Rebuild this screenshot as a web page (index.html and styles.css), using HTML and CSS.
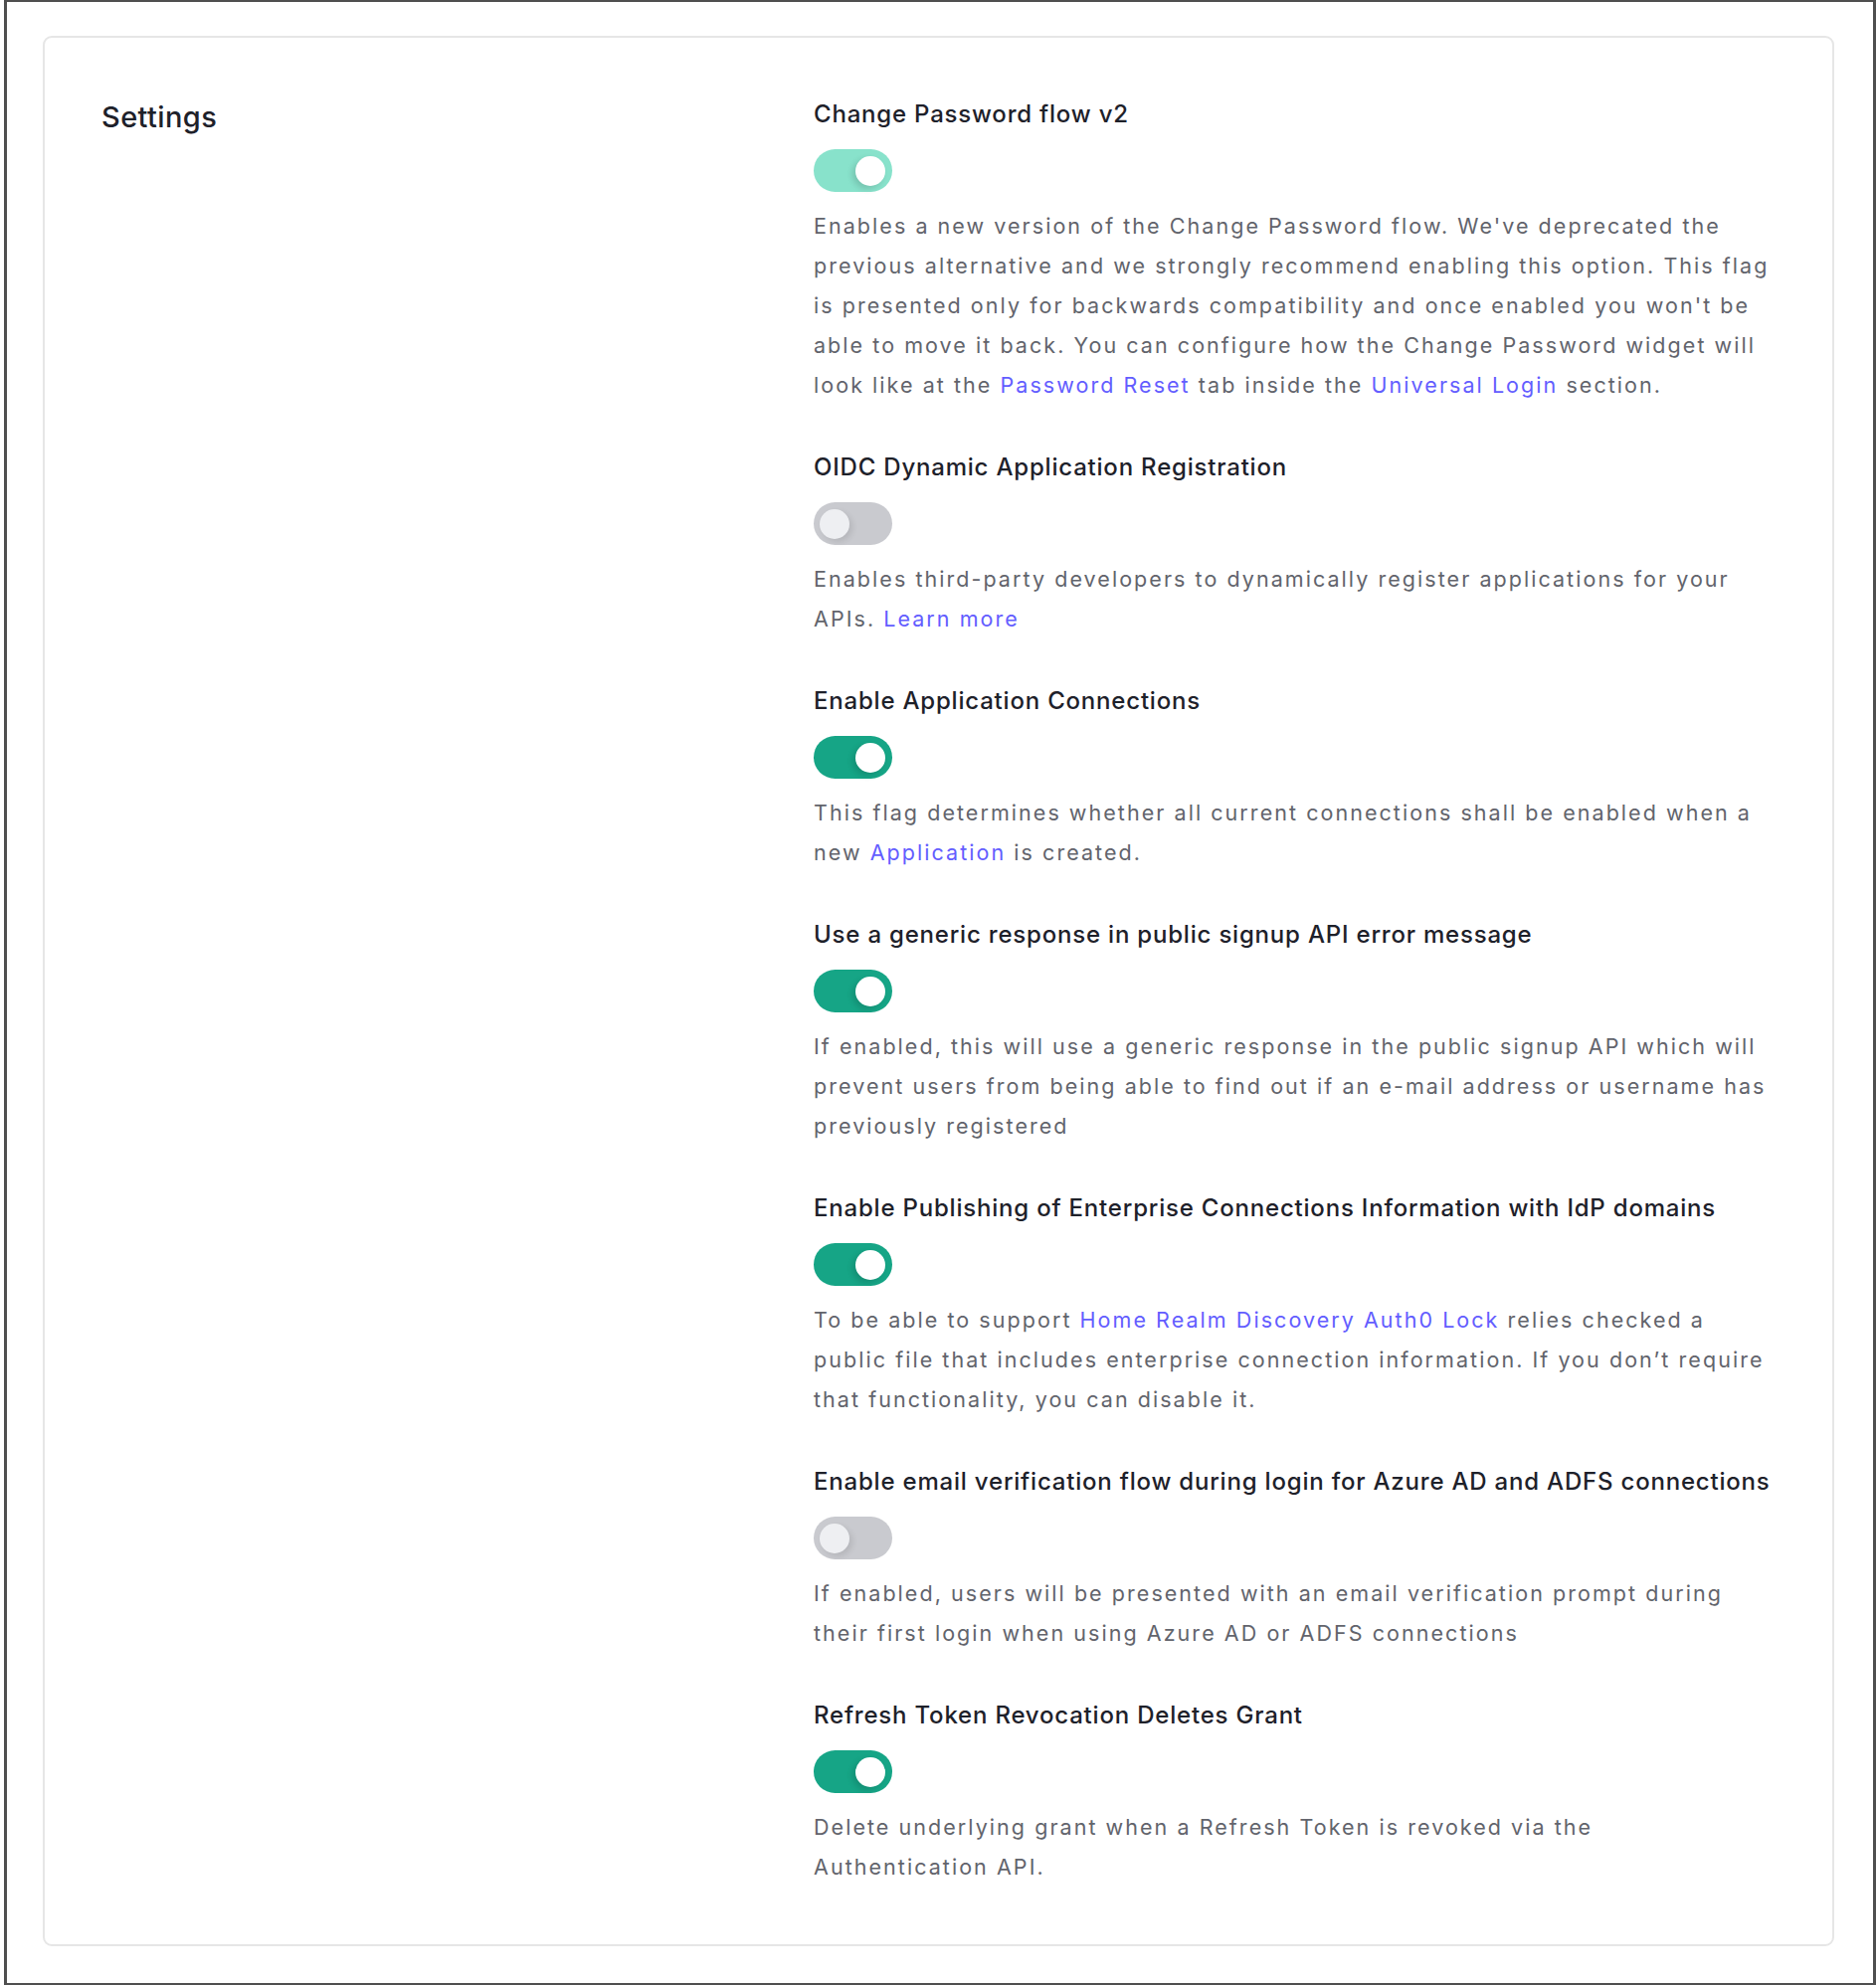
FILE: index.html
```html
<!DOCTYPE html>
<html lang="en">
<head>
<meta charset="utf-8">
<title>Settings</title>
<link rel="stylesheet" href="styles.css">
</head>
<body>
<div class="frame">
  <section class="card">
    <h2 class="card-title">Settings</h2>
    <div class="fields">
      <div class="field">
        <h3 class="field-label">Change Password flow v2</h3>
        <span class="toggle toggle-on toggle-locked"><span class="knob"></span></span>
        <p class="field-desc">Enables a new version of the Change Password flow. We've deprecated the previous alternative and we strongly recommend enabling this option. This flag is presented only for backwards compatibility and once enabled you won't be able to move it back. You can configure how the Change Password widget will look like at the <a href="#">Password Reset</a> tab inside the <a href="#">Universal Login</a> section.</p>
      </div>
      <div class="field">
        <h3 class="field-label">OIDC Dynamic Application Registration</h3>
        <span class="toggle toggle-off"><span class="knob"></span></span>
        <p class="field-desc">Enables third-party developers to dynamically register applications for your APIs. <a href="#">Learn more</a></p>
      </div>
      <div class="field">
        <h3 class="field-label">Enable Application Connections</h3>
        <span class="toggle toggle-on"><span class="knob"></span></span>
        <p class="field-desc">This flag determines whether all current connections shall be enabled when a new <a href="#">Application</a> is created.</p>
      </div>
      <div class="field">
        <h3 class="field-label">Use a generic response in public signup API error message</h3>
        <span class="toggle toggle-on"><span class="knob"></span></span>
        <p class="field-desc">If enabled, this will use a generic response in the public signup API which will prevent users from being able to find out if an e-mail address or username has previously registered</p>
      </div>
      <div class="field">
        <h3 class="field-label">Enable Publishing of Enterprise Connections Information with IdP domains</h3>
        <span class="toggle toggle-on"><span class="knob"></span></span>
        <p class="field-desc">To be able to support <a href="#">Home Realm Discovery</a> <a href="#">Auth0 Lock</a> relies checked a public file that includes enterprise connection information. If you don’t require that functionality, you can disable it.</p>
      </div>
      <div class="field">
        <h3 class="field-label">Enable email verification flow during login for Azure AD and ADFS connections</h3>
        <span class="toggle toggle-off"><span class="knob"></span></span>
        <p class="field-desc">If enabled, users will be presented with an email verification prompt during their first login when using Azure AD or ADFS connections</p>
      </div>
      <div class="field">
        <h3 class="field-label">Refresh Token Revocation Deletes Grant</h3>
        <span class="toggle toggle-on"><span class="knob"></span></span>
        <p class="field-desc">Delete underlying grant when a Refresh Token is revoked via the Authentication API.</p>
      </div>
    </div>
  </section>
</div>
</body>
</html>
```

FILE: styles.css
```css
* { box-sizing: border-box; }

html, body {
  margin: 0;
  padding: 0;
  background: #ffffff;
}

body {
  font-family: Inter, "Noto Sans", "Liberation Sans", sans-serif;
  color: #1e212a;
}

.frame {
  margin-left: 4px;
  width: 1882px;
  height: 1996px;
  border: 3px solid #4f4f4f;
  border-top-width: 2px;
  border-bottom-width: 2px;
  padding: 34px 39px 0 36px;
}

.card {
  border: 2px solid #e6e6e6;
  border-radius: 9px;
  height: 1921px;
  padding: 61px 61px 0 57px;
  display: grid;
  grid-template-columns: minmax(0, 1fr) 963px;
  align-items: start;
}

.card-title {
  margin: 1px 0 0;
  font-size: 29px;
  line-height: 36px;
  font-weight: 500;
  letter-spacing: 0.4px;
  color: #1e212a;
}

.fields {
  display: flex;
  flex-direction: column;
  gap: 47px;
}

.field {
  display: flex;
  flex-direction: column;
  align-items: flex-start;
}

.field-label {
  margin: 0 0 19px;
  font-size: 24px;
  line-height: 32px;
  font-weight: 500;
  letter-spacing: 0.8px;
  white-space: nowrap;
  color: #1e212a;
}

.field-desc {
  margin: 14px 0 0;
  font-size: 21.5px;
  line-height: 40px;
  letter-spacing: 2.05px;
  color: #62646c;
}

.field-desc a {
  color: #635dff;
  text-decoration: none;
}

.toggle {
  position: relative;
  display: block;
  width: 79px;
  height: 43px;
  border-radius: 22px;
}

.knob {
  position: absolute;
  top: 6.5px;
  width: 30px;
  height: 30px;
  border-radius: 50%;
}

.toggle-on { background: #16a586; }
.toggle-locked { background: #88e2cb; }
.toggle-off { background: #c9cacf; }

.toggle-on .knob {
  right: 7px;
  background: #ffffff;
  box-shadow: -3px 3px 6px rgba(0, 0, 0, 0.14);
}

.toggle-off .knob {
  left: 6px;
  background: #eeeff2;
  box-shadow: 3px 3px 6px rgba(0, 0, 0, 0.10);
}
```
